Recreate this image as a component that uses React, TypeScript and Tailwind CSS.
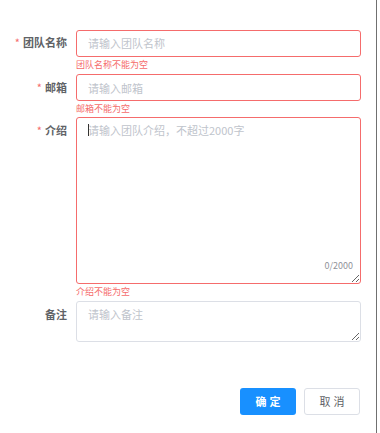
import React from 'react';

const font = { fontFamily: '"Noto Sans CJK SC", "Noto Sans", sans-serif' };

const Label = ({ text, required }: { text: string; required?: boolean }) => (
  <div className="w-[76px] shrink-0 pr-[9px] h-[27px] flex items-center justify-end text-[11px] font-bold text-[#606266]">
    {required && <span className="text-[#f56c6c] mr-[3px] font-normal">*</span>}
    {text}
  </div>
);

const ErrorText = ({ text, h }: { text: string; h: string }) => (
  <div className={`${h} text-[9px] leading-[13px] pt-[1px] text-[#f56c6c]`}>{text}</div>
);

export default function App() {
  return (
    <div style={font} className="w-[377px] h-[433px] bg-white border-r border-[#707070] flex flex-col">
      <form className="flex flex-col pt-[29px] pr-[15px]">
        <div className="flex">
          <Label text="团队名称" required />
          <div className="flex-1">
            <input
              placeholder="请输入团队名称"
              className="w-full h-[27px] border border-[#f56c6c] rounded-[3px] px-[11px] text-[11px] text-[#606266] outline-none placeholder:text-[#c0c4cc]"
            />
            <ErrorText text="团队名称不能为空" h="h-[17px]" />
          </div>
        </div>

        <div className="flex">
          <Label text="邮箱" required />
          <div className="flex-1">
            <input
              placeholder="请输入邮箱"
              className="w-full h-[27px] border border-[#f56c6c] rounded-[3px] px-[11px] text-[11px] text-[#606266] outline-none placeholder:text-[#c0c4cc]"
            />
            <ErrorText text="邮箱不能为空" h="h-[16px]" />
          </div>
        </div>

        <div className="flex">
          <Label text="介绍" required />
          <div className="flex-1">
            <div className="relative">
              <textarea
                placeholder="请输入团队介绍，不超过2000字"
                className="block w-full h-[167px] border border-[#f56c6c] rounded-[3px] px-[11px] py-[4px] text-[11px] leading-[17px] text-[#606266] outline-none resize-y placeholder:text-[#c0c4cc]"
              />
              <div className="absolute left-[12px] top-[7px] w-[1px] h-[12px] bg-[#333]" />
              <span className="absolute right-[8px] bottom-[12px] text-[9px] text-[#909399] bg-white">0/2000</span>
            </div>
            <ErrorText text="介绍不能为空" h="h-[17px]" />
          </div>
        </div>

        <div className="flex">
          <Label text="备注" />
          <div className="flex-1">
            <textarea
              placeholder="请输入备注"
              className="block w-full h-[41px] border border-[#dcdfe6] rounded-[3px] px-[11px] py-[4px] text-[11px] leading-[17px] text-[#606266] outline-none resize-y placeholder:text-[#c0c4cc]"
            />
          </div>
        </div>

        <div className="flex justify-end gap-[8px] mt-[46px] pr-[1px]">
          <button
            type="button"
            className="w-[56px] h-[27px] rounded-[3px] bg-[#1890ff] text-white text-[11px] font-bold tracking-[3px] pl-[3px]"
          >
            确定
          </button>
          <button
            type="button"
            className="w-[56px] h-[27px] rounded-[3px] bg-white border border-[#dcdfe6] text-[#606266] text-[11px] tracking-[3px] pl-[3px]"
          >
            取消
          </button>
        </div>
      </form>
    </div>
  );
}
